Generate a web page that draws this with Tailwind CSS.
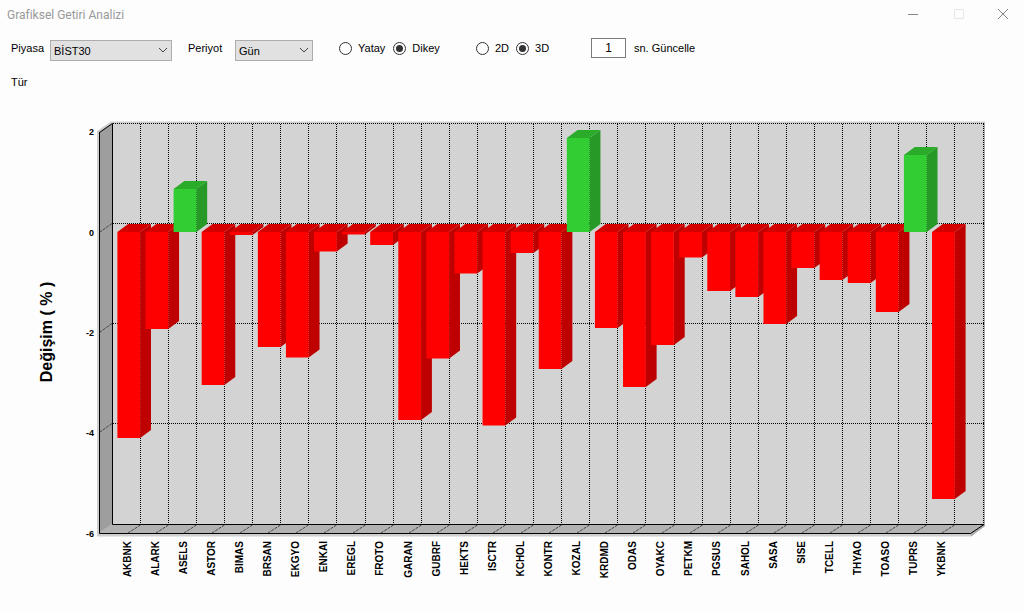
<!DOCTYPE html>
<html lang="tr">
<head>
<meta charset="utf-8">
<title>Grafiksel Getiri Analizi</title>
<script src="https://cdn.jsdelivr.net/npm/@tailwindcss/browser@4"></script>
</head>
<body class="min-h-screen bg-[#fdfdfd] font-['Liberation_Sans',sans-serif] text-[11px] leading-4 text-black">
<header class="flex h-7 items-center justify-between pl-[7px]">
  <h1 class="pt-[2px] font-[Roboto,sans-serif] text-xs text-[#999]">Grafiksel Getiri Analizi</h1>
  <div class="flex h-7 text-[#888]">
    <button type="button" aria-label="Simge durumuna küçült" class="flex h-7 w-[46px] items-center justify-center"><svg class="size-3" viewBox="0 0 12 12" fill="none" stroke="currentColor"><path d="M1 6.5h10"/></svg></button>
    <button type="button" aria-label="Ekranı kapla" disabled class="flex h-7 w-[46px] items-center justify-center text-[#e6e6e6]"><svg class="size-3" viewBox="0 0 12 12" fill="none" stroke="currentColor"><path d="M1.500 1.500h9v9h-9z"/></svg></button>
    <button type="button" aria-label="Kapat" class="flex h-7 w-[42px] items-center justify-center"><svg class="size-3" viewBox="0 0 12 12" fill="none" stroke="currentColor"><path d="M1 1l10 10M11 1L1 11"/></svg></button>
  </div>
</header>
<main>
  <form class="flex h-11 items-center pl-[11px]">
    <label for="piyasa" class="mb-1 w-[39px]">Piyasa</label>
    <div class="relative">
      <select id="piyasa" class="block h-[21px] w-[122px] appearance-none border border-[#adadad] bg-[#e1e1e1] pt-px pl-[3px] text-[11px] leading-[18px]"><option>BİST30</option></select>
      <svg class="pointer-events-none absolute top-[7px] right-1 h-[7px] w-[10px]" viewBox="0 0 10 7" fill="none" stroke="#444"><path d="M1 1l4 4 4-4"/></svg>
    </div>
    <label for="periyot" class="mb-1 ml-4 w-[47px]">Periyot</label>
    <div class="relative">
      <select id="periyot" class="block h-[21px] w-[78px] appearance-none border border-[#adadad] bg-[#e1e1e1] pt-px pl-[3px] text-[11px] leading-[18px]"><option>Gün</option></select>
      <svg class="pointer-events-none absolute top-[7px] right-1 h-[7px] w-[10px]" viewBox="0 0 10 7" fill="none" stroke="#444"><path d="M1 1l4 4 4-4"/></svg>
    </div>
    <fieldset class="mb-1 ml-[26px] flex w-[137px] gap-2">
      <label class="flex items-center gap-[6px]"><input type="radio" name="yon" class="size-[13px] appearance-none rounded-full border border-[#333] bg-white bg-clip-content p-[2px] checked:bg-[#333]">Yatay</label>
      <label class="flex items-center gap-[6px]"><input type="radio" name="yon" checked class="size-[13px] appearance-none rounded-full border border-[#333] bg-white bg-clip-content p-[2px] checked:bg-[#333]">Dikey</label>
    </fieldset>
    <fieldset class="mb-1 flex w-[115px] gap-[7px]">
      <label class="flex items-center gap-[6px]"><input type="radio" name="boyut" class="size-[13px] appearance-none rounded-full border border-[#333] bg-white bg-clip-content p-[2px] checked:bg-[#333]">2D</label>
      <label class="flex items-center gap-[6px]"><input type="radio" name="boyut" checked class="size-[13px] appearance-none rounded-full border border-[#333] bg-white bg-clip-content p-[2px] checked:bg-[#333]">3D</label>
    </fieldset>
    <input id="saniye" type="text" value="1" class="mb-1 h-5 w-[35px] border border-[#7a7a7a] bg-white text-center text-xs">
    <label for="saniye" class="mb-1 ml-2">sn. Güncelle</label>
  </form>
  <p class="mt-[2px] pl-[11px]">Tür</p>
  <svg class="block w-full" viewBox="0 90 1024 523" role="img" aria-label="Değişim ( % )">
    <g fill="#cfcfcf">
      <path d="M97 536V131L111 121.500H985V526L971 536.500H97Z"/>
      <path d="M971 536.500L985 526V123H983V524L970 533Z" fill="#aaa"/>
      <path d="M112 123H984V524H112Z" fill="#d3d3d3"/>
      <path d="M99 132L112 123V524L99 533Z" fill="#9e9e9e"/>
      <path d="M99 533L112 524H984L970 533Z" fill="#b2b2b2"/>
    </g>
    <g id="grid" fill="none" stroke="#000" stroke-dasharray="1 1"></g>
    <g id="ticks" fill="none" stroke="#444" stroke-dasharray="3 1"></g>
    <path d="M99.500 132V533.500H970.500L984 524.500H112.500V123.500L99.500 132.500" fill="none" stroke="#000"/>
    <g id="bars"></g>
    <g id="values" font-size="9" font-weight="700" text-anchor="end"></g>
    <g id="names" font-size="10" font-weight="700" text-anchor="end"></g>
    <text transform="translate(52 332) rotate(-90)" text-anchor="middle" font-size="16" font-weight="700">Değişim ( % )</text>
  </svg>
</main>
<script>
// [symbol, y of the bar's free end]; the zero line is at y = 232
const data = [["AKBNK",438],["ALARK",329],["ASELS",189],["ASTOR",385],["BIMAS",235],["BRSAN",347],["EKGYO",357.5],["ENKAI",251.5],["EREGL",234.5],["FROTO",245],["GARAN",420],["GUBRF",358.5],["HEKTS",273.5],["ISCTR",425.5],["KCHOL",253],["KONTR",369],["KOZAL",138],["KRDMD",328],["ODAS",387],["OYAKC",345],["PETKM",257.5],["PGSUS",291],["SAHOL",297],["SASA",324],["SISE",268],["TCELL",280],["THYAO",283],["TOASO",312],["TUPRS",155],["YKBNK",499]];
const step = 28.09;
let bars = "", names = "", grid = "", ticks = "", values = "";
data.forEach(([name, end], i) => {
  const l = 117.4 + step * i, r = l + 22.8, up = end < 232;
  const t = up ? end : 232, b = up ? 232 : end;
  const c = up ? ["#32cd32", "#2aab2a", "#269926"] : ["#ff0000", "#d40000", "#bf0000"];
  bars += `<path fill="${c[2]}" d="M${r} ${t}l10.800 -8V${b - 8}L${r} ${b}Z"/><path fill="${c[1]}" d="M${l} ${t}l10.800 -8h22.800L${r} ${t}Z"/><path fill="${c[0]}" d="M${l} ${t}H${r}V${b}H${l}Z"/>`;
  names += `<text transform="translate(${Math.round(130.6 + step * i)} 541) rotate(-90)">${name}</text>`;
  const x = Math.floor(140.33 + step * i) + 0.5;
  grid += `<path d="M${x} 124V524"/>`;
  ticks += `<path d="M${x} 525L${x - 12.5} 533"/>`;
});
[2, 0, -2, -4, -6].forEach((v, i) => {
  const y = 123.5 + 100 * i;
  if (i < 4) grid += `<path d="M113 ${y}H984"/>`;
  if (i > 0 && i < 4) ticks += `<path d="M112 ${y}L100 ${y + 8.5}"/>`;
  values += `<text x="94" y="${Math.round(135.3 + 100.3 * i)}">${v}</text>`;
});
grid += `<path d="M983.5 124V524"/>`;
for (const [id, html] of Object.entries({ bars, names, grid, ticks, values })) document.getElementById(id).innerHTML = html;
</script>
</body>
</html>
